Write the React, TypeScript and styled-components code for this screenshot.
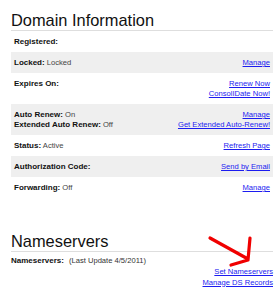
import React from 'react'
import styled, { createGlobalStyle } from 'styled-components'

const GlobalStyle = createGlobalStyle`
  body {
    margin: 0;
    background: #ffffff;
    font-family: "Liberation Sans", Arial, sans-serif;
  }
`

type Line = { label?: string; value?: string }

type InfoRow = {
  lines: Line[]
  links: string[]
  shaded?: boolean
}

const ROWS: InfoRow[] = [
  { lines: [{ label: 'Registered:' }], links: [] },
  { lines: [{ label: 'Locked:', value: 'Locked' }], links: ['Manage'], shaded: true },
  { lines: [{ label: 'Expires On:' }], links: ['Renew Now', 'ConsolIDate Now!'] },
  {
    lines: [
      { label: 'Auto Renew:', value: 'On' },
      { label: 'Extended Auto Renew:', value: 'Off' },
    ],
    links: ['Manage', 'Get Extended Auto-Renew!'],
    shaded: true,
  },
  { lines: [{ label: 'Status:', value: 'Active' }], links: ['Refresh Page'] },
  { lines: [{ label: 'Authorization Code:' }], links: ['Send by Email'], shaded: true },
  { lines: [{ label: 'Forwarding:', value: 'Off' }], links: ['Manage'] },
]

const App: React.FC = () => {
  return (
    <>
      <GlobalStyle />
      <Page>
        <Heading>Domain Information</Heading>
        <Table>
          {ROWS.map((row, i) => (
            <Row key={i} $shaded={row.shaded}>
              <LeftCol>
                {row.lines.map((line, j) => (
                  <div key={j}>
                    <Label>{line.label}</Label>
                    {line.value && <Value> {line.value}</Value>}
                  </div>
                ))}
              </LeftCol>
              <RightCol>
                {row.links.map((link) => (
                  <StyledLink key={link} href="#">
                    {link}
                  </StyledLink>
                ))}
              </RightCol>
            </Row>
          ))}
        </Table>

        <Section>
          <Heading>Nameservers</Heading>
          <NsLine>
            <Label>Nameservers:</Label>
            <NsNote>(Last Update 4/5/2011)</NsNote>
          </NsLine>
          <NsLinks>
            <StyledLink href="#">Set Nameservers</StyledLink>
            <StyledLink href="#">Manage DS Records</StyledLink>
          </NsLinks>
          <Arrow width="50" height="40" viewBox="0 0 50 40">
            <path
              d="M5 6 L43 27 M45 6 L43 28 L26 33"
              fill="none"
              stroke="#f00000"
              strokeWidth="3.2"
              strokeLinecap="round"
              strokeLinejoin="round"
            />
          </Arrow>
        </Section>
      </Page>
    </>
  )
}

const Page = styled.div`
  width: 262px;
  padding-left: 11px;
  color: #000;
`

const Heading = styled.h2`
  margin: 11px 0 0;
  padding-bottom: 1px;
  font-size: 16.4px;
  line-height: 18px;
  font-weight: normal;
  color: #111;
  border-bottom: 1px solid #dedede;
`

const Table = styled.div`
  display: flex;
  flex-direction: column;
`

const Row = styled.div<{ $shaded?: boolean }>`
  display: flex;
  justify-content: space-between;
  padding: 6px 3px 5px;
  font-size: 7.6px;
  line-height: 10px;
  background: ${(p) => (p.$shaded ? '#efefef' : 'transparent')};
`

const LeftCol = styled.div`
  display: flex;
  flex-direction: column;
`

const RightCol = styled.div`
  display: flex;
  flex-direction: column;
  align-items: flex-end;
`

const Label = styled.span`
  font-size: 8px;
  font-weight: bold;
  color: #111;
`

const Value = styled.span`
  color: #444;
`

const StyledLink = styled.a`
  color: #1c1cf0;
  text-decoration: underline;
  white-space: nowrap;
`

const Section = styled.section`
  position: relative;
  margin-top: 34px;
`

const NsLine = styled.div`
  padding-top: 4px;
  font-size: 7.6px;
  line-height: 10px;
`

const NsNote = styled.span`
  margin-left: 5px;
  color: #333;
`

const NsLinks = styled.div`
  display: flex;
  flex-direction: column;
  align-items: flex-end;
  margin-top: 1px;
  font-size: 7.6px;
  line-height: 10.5px;
`

const Arrow = styled.svg`
  position: absolute;
  left: 194px;
  top: 0px;
`

export default App
